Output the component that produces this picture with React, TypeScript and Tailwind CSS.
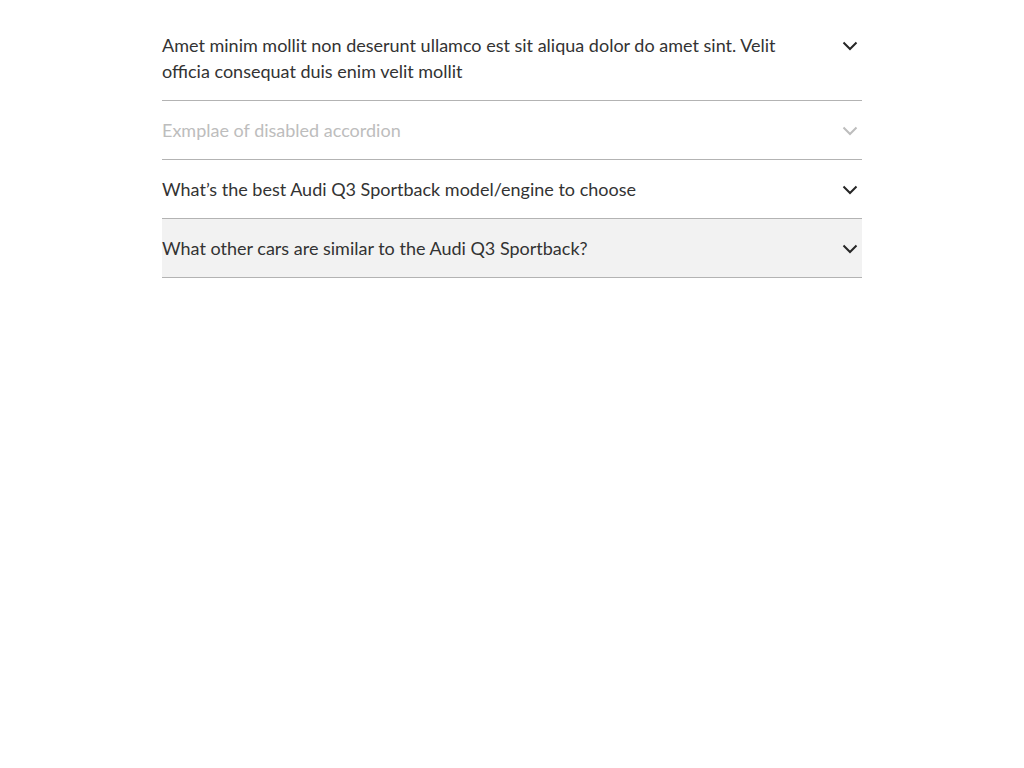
import { useState } from "react";

type Item = {
    title: string;
    disabled?: boolean;
};

const items: Item[] = [
    {
        title: "Amet minim mollit non deserunt ullamco est sit aliqua dolor do amet sint. Velit officia consequat duis enim velit mollit",
    },
    { title: "Exmplae of disabled accordion", disabled: true },
    { title: "What’s the best Audi Q3 Sportback model/engine to choose" },
    { title: "What other cars are similar to the Audi Q3 Sportback?" },
];

function Chevron({ disabled }: { disabled?: boolean }) {
    return (
        <svg
            width="16"
            height="10"
            viewBox="0 0 16 10"
            fill="none"
            className={disabled ? "text-[#bdbdbd]" : "text-[#262626]"}
        >
            <path d="M1.5 1.5 L8 8 L14.5 1.5" stroke="currentColor" strokeWidth="2" />
        </svg>
    );
}

export default function App() {
    // last row is shown in its hover state
    const [hovered] = useState(3);

    return (
        <div className="min-h-screen bg-white pt-4 font-['Lato',sans-serif]">
            <div className="mx-auto w-[700px]">
                {items.map((item, i) => (
                    <button
                        key={i}
                        disabled={item.disabled}
                        className={
                            "flex w-full items-start justify-between border-b border-[#b3b3b3] py-4 text-left text-[18px] leading-[26px] " +
                            (hovered === i ? "bg-[#f2f2f2] " : "") +
                            (item.disabled ? "text-[#bdbdbd]" : "text-[#333333]")
                        }
                    >
                        <span className="max-w-[630px]">{item.title}</span>
                        <span className="mr-[4px] mt-[9px] flex">
                            <Chevron disabled={item.disabled} />
                        </span>
                    </button>
                ))}
            </div>
        </div>
    );
}
